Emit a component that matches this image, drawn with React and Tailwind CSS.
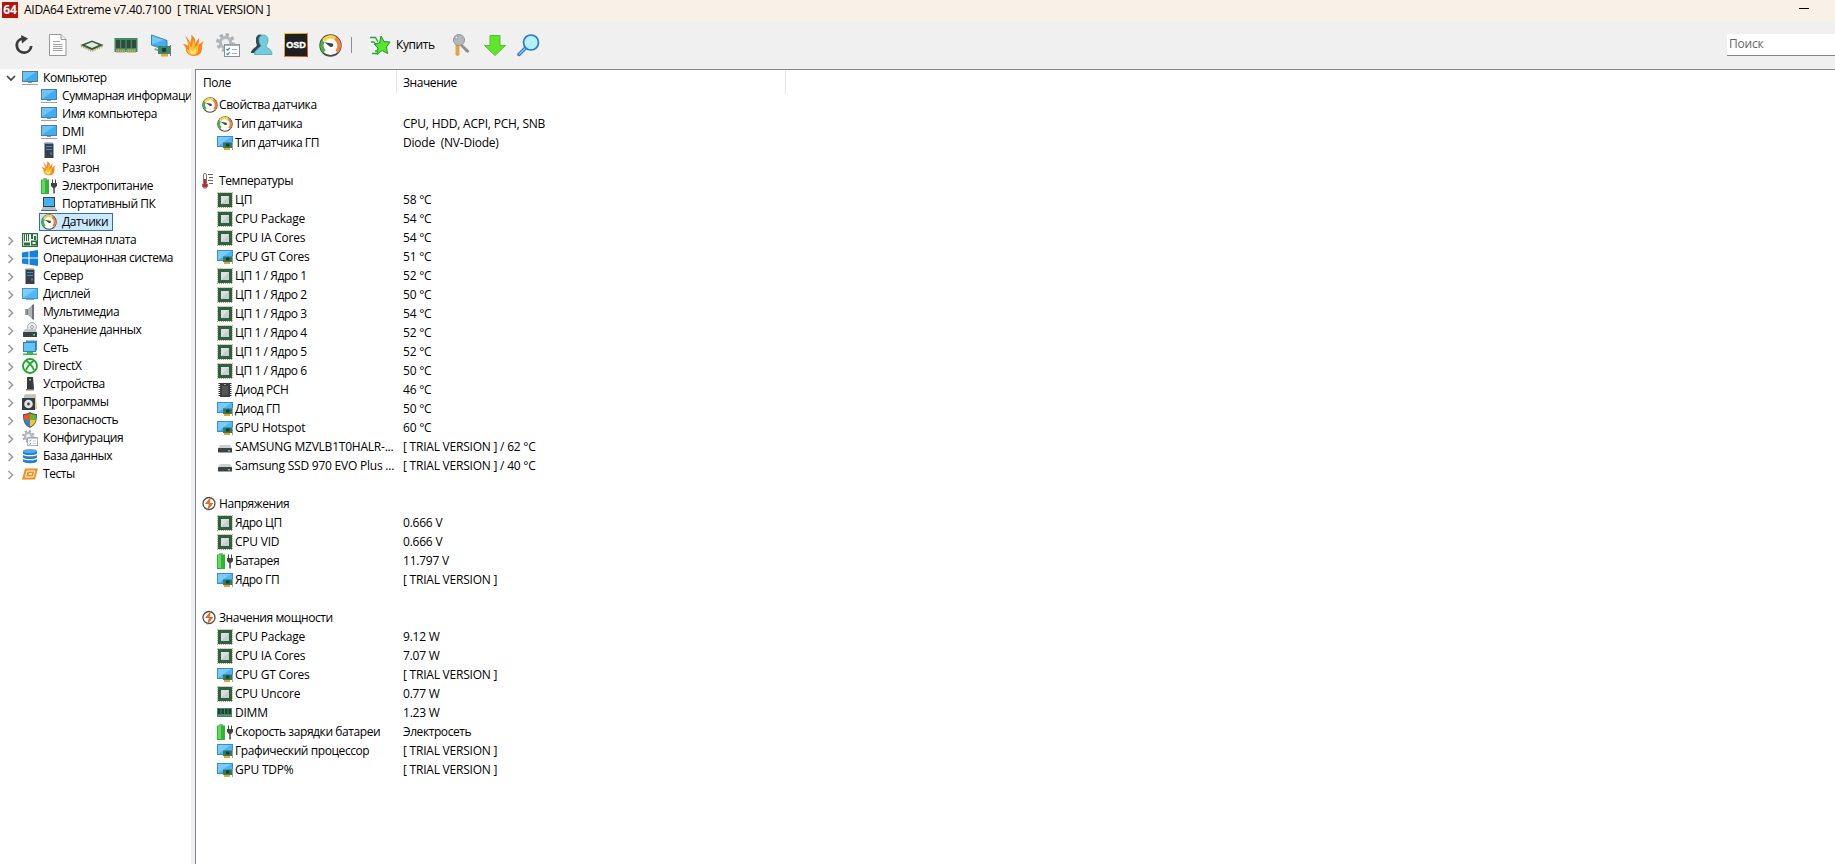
const Svg = ({ size = 16, box = 16, children }) => (
  <svg width={size} height={size} viewBox={`0 0 ${box} ${box}`} className="shrink-0">{children}</svg>
);

const Monitor = () => (
  <Svg>
    <rect x="0.5" y="1.5" width="15" height="10" fill="#3fadf3" stroke="#557c99"/>
    <path d="M1 11V2h13z" fill="#6cc5fa"/>
    <path d="M6 12h4v1H6z" fill="#8793a0"/>
    <path d="M0 14.500h16" stroke="#8ea6bb"/>
  </Svg>
);

const Display = () => (
  <Svg>
    <rect x="0.5" y="2.5" width="15" height="10" fill="#4fb8f6" stroke="#3f93cc"/>
    <path d="M1 12V3h13z" fill="#7bcdfb"/>
    <path d="M4 13.5h8" stroke="#8ea6bb"/>
  </Svg>
);

const Server = () => (
  <Svg>
    <path d="M3.5 1h8l1 1v14h-9z" fill="#3a404b"/>
    <path d="M3.5 0.500h8l1 1.500h-9z" fill="#8b9098"/>
    <path d="M5 4.5h6M5 7.5h6" stroke="#3c91df"/>
    <path d="M9 10.500h2v2H9z" fill="#687080"/>
  </Svg>
);

const Flame = ({ size = 16 }) => (
  <Svg size={size} box={24}>
    <path d="M3 3c3 2 4 4 5 7 1-3 2-5 1-8 4 2 5 5 4 9l4-6c0 3 0 5-1 7l6-4c-2 3-2 5-2 7 0 5-3 8-8 8S4 20 4 16c0-1-1-3-3-5 3 0 4 1 5 2C6 9 5 6 3 3z" fill="#f8841f"/>
    <path d="M5 7c2 2 3 5 4 8 1-3 2-5 2-8 2 3 2 5 1 8l5-4c-1 3-1 5-1 7-1 3-3 4-5 4-4 0-6-3-6-6l2 1c0-4 0-6-2-10z" fill="#ffc33a"/>
    <path d="M8 16l3 3 3-3c0 3-1 5-3 5s-3-2-3-5z" fill="#ffe98a"/>
  </Svg>
);

const Battery = () => (
  <Svg>
    <path d="M2 0h4v2H2z" fill="#a9b0a8"/>
    <path d="M0 1.500h8V16H0z" fill="#2fb532"/>
    <path d="M1 2h3v13H1z" fill="#62d95f"/>
    <path d="M11.500 1.500v4M14.500 1.500v4" stroke="#444"/>
    <path d="M10 5h6v3l-2 2h-2l-2-2z" fill="#444"/>
    <path d="M13 10v5.500" stroke="#444" strokeWidth="1.500"/>
  </Svg>
);

const Laptop = () => (
  <Svg>
    <rect x="2.500" y="1.500" width="11" height="9" fill="#46b0f2" stroke="#33424f"/>
    <path d="M2 11h12l2 3H0z" fill="#b9bec4"/>
    <path d="M0 14h16v1H0z" fill="#59636d"/>
  </Svg>
);

const Gauge = ({ size = 16 }) => (
  <Svg size={size} box={24}>
    <circle cx="12" cy="12" r="10.800" fill="#fff" stroke="#4b4b43" strokeWidth="1.700"/>
    <path d="M5.600 18.400A9 9 0 0 1 4.200 7.500" fill="none" stroke="#4fae45" strokeWidth="3.800"/>
    <path d="M4.700 6.600A9 9 0 0 1 17 4.500" fill="none" stroke="#f4d54a" strokeWidth="3.800"/>
    <path d="M17 4.500A9 9 0 0 1 18.400 18.400" fill="none" stroke="#ee8140" strokeWidth="3.800"/>
    <path d="M5.500 8.500l8.500 1.500c2 1.200 .5 4.200-2 3.500z" fill="#3b4548"/>
  </Svg>
);

const Board = () => (
  <Svg>
    <rect x="0.600" y="1.600" width="14.800" height="12.800" fill="#f3f8f3" stroke="#2c7140" strokeWidth="1.200"/>
    <path d="M2.500 2v7M4.500 2v7M6.500 2v7" stroke="#2c7140"/>
    <path d="M9 2h2v5H9zM12 4h2v4h-2zM2 10.500h6v3H2zM9 8.500h6v5H9z" fill="#2c7140"/>
    <path d="M10.500 10h3v2h-3z" fill="#f3f8f3"/>
  </Svg>
);

const Windows = () => (
  <Svg>
    <path d="M0 2.500l6.500-1v6H0zM7.500 1.300L16 0v7.500H7.500zM0 8.500h6.500v6L0 13.500zM7.500 8.500H16V16l-8.500-1.300z" fill="#1683d8"/>
  </Svg>
);

const Speaker = () => (
  <Svg>
    <path d="M3 5h3v6H3z" fill="#6e747b"/>
    <path d="M6 5l4-4v14l-4-4z" fill="#aeb3b7"/>
    <path d="M10 1l2-1v16l-2-1z" fill="#6e7377"/>
    <path d="M4 5v6" stroke="#c7cbd0"/>
  </Svg>
);

const Storage = () => (
  <Svg>
    <circle cx="10" cy="5" r="4.500" fill="#eceeef" stroke="#a7acb0"/>
    <circle cx="10" cy="5" r="1.500" fill="#fff" stroke="#999"/>
    <path d="M3 7h10l2 3H1z" fill="#c4c7c9"/>
    <rect x="1" y="10" width="14" height="5" rx="0.500" fill="#3c4144"/>
    <path d="M11 12h2v1.500h-2z" fill="#52e264"/>
  </Svg>
);

const Network = () => (
  <Svg>
    <path d="M4 .5h11v10H4z" fill="#3c93cf"/>
    <rect x="1.500" y="2.500" width="12" height="9" fill="#64c2f6" stroke="#3581b5"/>
    <path d="M5 12h6v1.500h4V15H1v-1.500h4z" fill="#3bb849"/>
  </Svg>
);

const DirectX = () => (
  <Svg>
    <circle cx="8" cy="8" r="7" fill="#fff" stroke="#1fa82b" strokeWidth="1.900"/>
    <path d="M4 3.200c2 0 6.500 5 8 9M12 3.200c-2 0-6.500 5-8 9" fill="none" stroke="#1fa82b" strokeWidth="1.800"/>
  </Svg>
);

const Device = () => (
  <Svg>
    <path d="M5 1h6l1 12H5z" fill="#393b3d"/>
    <path d="M4 13h8v1.500H4z" fill="#777b7e"/>
    <path d="M7 3h2v1.500H7z" fill="#57e556"/>
  </Svg>
);

const Programs = () => (
  <Svg>
    <path d="M3 0h11l1 15H3z" fill="#e7c98f"/>
    <path d="M2 1h11v3H2z" fill="#b8c4cc"/>
    <rect x="0" y="4" width="13" height="12" fill="#353c42"/>
    <circle cx="6.500" cy="10" r="4.300" fill="#e2e5e8"/>
    <circle cx="6.500" cy="10" r="1.400" fill="#37404a"/>
  </Svg>
);

const Shield = () => (
  <Svg>
    <path d="M8 0c2 1.500 5 2 7 2 0 7-1 11-7 14C2 13 1 9 1 2c2 0 5-.5 7-2z" fill="#55595d"/>
    <path d="M8 1.500V8H2.200C2 6 2 4.500 2 3c2 0 4-.5 6-1.500z" fill="#e8562a"/>
    <path d="M8 1.500V8h5.800c.2-2 .2-3.500.2-5-2 0-4-.5-6-1.500z" fill="#6bb52b"/>
    <path d="M8 8v6.800C4.500 13 2.800 11 2.200 8z" fill="#2f82d6"/>
    <path d="M8 8v6.800c3.500-1.800 5.200-3.800 5.800-6.800z" fill="#f7c52c"/>
  </Svg>
);

const Config = ({ size = 16 }) => (
  <Svg size={size} box={24}>
    <circle cx="9.500" cy="9.500" r="7.800" fill="none" stroke="#a9afb5" strokeWidth="3.200" strokeDasharray="3.300 2.800"/>
    <circle cx="9.500" cy="9.500" r="5.200" fill="#eceeef" stroke="#b3b8bd" strokeWidth="3.200"/>
    <rect x="8.500" y="11.500" width="15" height="12" fill="#fff" stroke="#868d94"/>
    <path d="M9 11.500h14v1.500H9z" fill="#a6adb4"/>
    <path d="M10.500 16l1.200 1.200 2-2.400M10.500 20.500l1.200 1.200 2-2.400" fill="none" stroke="#2b7fd6" strokeWidth="1.200"/>
    <path d="M16 16.500h5M16 20.500h5" stroke="#a7aeb5"/>
  </Svg>
);

const Database = () => (
  <Svg>
    <path d="M1 3v10c0 3 14 3 14 0V3z" fill="#2581d0"/>
    <path d="M1 6c1 2.200 13 2.200 14 0M1 10c1 2.200 13 2.200 14 0" fill="none" stroke="#fff" strokeWidth="1.200"/>
    <ellipse cx="8" cy="3" rx="7" ry="2" fill="#55a9ea"/>
  </Svg>
);

const Tests = () => (
  <Svg>
    <path d="M3 2.500h13L13 13.500H0z" fill="#ee9220"/>
    <path d="M5 5h7.800l-1.500 6H3.500z" fill="none" stroke="#fff" strokeWidth="0.900"/>
    <path d="M7 7.200h3l-.4 1.600h-3z" fill="#fff"/>
  </Svg>
);

const Cpu = () => (
  <Svg>
    <rect x="0.600" y="0.600" width="14.800" height="14.800" fill="none" stroke="#a9a45b" strokeWidth="1.200" strokeDasharray="1 1"/>
    <rect x="1" y="1" width="14" height="14" fill="#2f6044"/>
    <rect x="4" y="4" width="8" height="8" fill="#dce0dd"/>
    <path d="M4 12l8-8v8z" fill="#c8cecb"/>
  </Svg>
);

const Gpu = () => (
  <Svg>
    <rect x="0.500" y="1.500" width="15" height="10" fill="#4db5f5" stroke="#3c8fc5"/>
    <path d="M1 11V2h13z" fill="#78cbfa"/>
    <rect x="6" y="7.500" width="9" height="5.500" fill="#35795e"/>
    <path d="M9 8.500h3.500v3H9z" fill="#173e31"/>
    <path d="M7 13h6v2H7z" fill="#e0aa2d"/>
    <path d="M15.500 7v8" stroke="#9aa0a5"/>
  </Svg>
);

const Pch = () => (
  <Svg>
    <path d="M1.500 1.500h13M1.500 3.500h13M1.500 5.500h13M1.500 7.500h13M1.500 9.500h13M1.500 11.500h13M1.500 13.500h13" stroke="#333"/>
    <path d="M3 1h3l2 2 2-2h3v14H3z" fill="#3c3e40"/>
    <path d="M5 4h6v9H5z" fill="#535557"/>
  </Svg>
);

const Drive = () => (
  <Svg>
    <path d="M3 6h10l2 3H1z" fill="#cdd0d2"/>
    <rect x="1" y="9" width="14" height="4.500" rx="0.500" fill="#3e4346"/>
    <path d="M11 11h2v1.500h-2z" fill="#48dd63"/>
  </Svg>
);

const Dimm = () => (
  <Svg>
    <path d="M0 3h15v9H0z" fill="#3f8a67"/>
    <path d="M1 4h2.500v5H1zM4.500 4H7v5H4.500zM8 4h2.500v5H8zM11.500 4H14v5h-2.500z" fill="#213c32"/>
    <path d="M1 10.500h13" stroke="#7f9a64" strokeDasharray="1 1"/>
  </Svg>
);

const Thermo = () => (
  <Svg>
    <path d="M1.500 2a1.500 1.500 0 0 1 3 0v8a2.800 2.800 0 1 1-3 0z" fill="#fff" stroke="#777"/>
    <path d="M2 6h2v5H2z" fill="#c22a2a"/>
    <circle cx="3" cy="12.300" r="2.400" fill="#c22a2a"/>
    <path d="M6 1.500h5M7 4.500h4M6 7.500h5M7 10.500h4" stroke="#666"/>
  </Svg>
);

const Volt = () => (
  <Svg>
    <circle cx="7" cy="7.500" r="6" fill="#fff" stroke="#4e4e4e" strokeWidth="1.300"/>
    <path d="M9.500 0L3 8h4l-2.500 7.500L11.500 7H7.500z" fill="#df6a28"/>
  </Svg>
);

const Refresh = () => (
  <Svg size={20} box={20}>
    <path d="M8 3.500A7.200 7.200 0 1 0 17.200 11" fill="none" stroke="#3b3b3b" strokeWidth="2.800"/>
    <path d="M7 0l7 3.500L8 8.500z" fill="#3b3b3b"/>
  </Svg>
);

const Doc = () => (
  <Svg size={24} box={24}>
    <path d="M3.500 1.500H15l5 5v16H3.500z" fill="#fdfdfd" stroke="#979797"/>
    <path d="M15 1.500v5h5" fill="#eee" stroke="#979797"/>
    <path d="M7 8.500h7M7 11.500h9.500M7 13.500h9.500M7 15.500h9.500M7 17.500h9.500" stroke="#a2a2a2"/>
  </Svg>
);

const Chip = () => (
  <Svg size={24} box={24}>
    <path d="M.5 12.500L12 8l11.500 4.500L12 18z" fill="#d0bc68"/>
    <path d="M.5 12L12 7.500 23.500 12 12 17z" fill="#2f5c3d"/>
    <path d="M5 12l7-3 7 3-7 3z" fill="#e3eae4"/>
    <path d="M1 13.500l11 5 11-5" fill="none" stroke="#8f7d38" strokeDasharray="1 1.500"/>
  </Svg>
);

const Ram = () => (
  <Svg size={24} box={24}>
    <path d="M.5 5h23v14H.5z" fill="#3e8b65"/>
    <path d="M2 7h4v8H2zM7.300 7h4v8h-4zM12.700 7h4v8h-4zM18 7h4v8h-4z" fill="#344841"/>
    <path d="M2 16h9v3.500H2zM13 16h9v3.500h-9z" fill="#8f9a59"/>
    <path d="M2 18h20" stroke="#d0c47a" strokeDasharray="1 1"/>
  </Svg>
);

const ScreenCard = () => (
  <Svg size={24} box={24}>
    <path d="M3.500 2L19 7.500v10L3.500 12z" fill="#45adf0" stroke="#3d7fae"/>
    <path d="M4 11.500V2.800L16 7z" fill="#72c8fa"/>
    <path d="M7 15l6 2.500v1.500l-7-2z" fill="#96a2ac"/>
    <rect x="10" y="13" width="12" height="8" fill="#3d8565"/>
    <path d="M14 15h4v4h-4z" fill="#1a4032"/>
    <path d="M13 21h7v2.500h-7z" fill="#ddac36"/>
    <path d="M22.500 12v11" stroke="#72777b"/>
  </Svg>
);

const User = () => (
  <Svg size={24} box={24}>
    <path d="M6 6c0-6 8-6 8 0 0 3-1 5-2 6 0 3 4 4 4 8H1c0-4 5-5 6-8-1-1-1-3-1-6z" fill="#2f4753"/>
    <path d="M9 6.500c0-6 9-6 9 0 0 3-1 5-2 6 0 3 6 3 6 9H4.500c0-5 5.500-6 6.500-9-1-1-2-3-2-6z" fill="#74cbdc" stroke="#5cb0c3"/>
  </Svg>
);

const Osd = () => (
  <span className="flex h-6 w-6 items-center justify-center bg-linear-to-br from-[#f2d21d] to-[#d93a25]">
    <span className="flex h-[22px] w-[22px] items-center justify-center bg-[#202022] font-['Liberation_Sans',sans-serif] text-[9px] font-bold tracking-normal text-white [-webkit-text-stroke:0.4px_white]">OSD</span>
  </span>
);

const Star = () => (
  <Svg size={24} box={24}>
    <path d="M13 3l3 5.500 6 .5-3.500 5 1 6.500-5.500-3-5 4 1-6.500-4-4 5.500-1z" fill="#55e72b" stroke="#27932a"/>
    <path d="M2 4.500h5.500L10 9M3 9h3l2 3M7 18h2l1-2M4 20.500h5" fill="none" stroke="#2ba134" strokeWidth="1.300"/>
  </Svg>
);

const Keys = () => (
  <Svg size={24} box={24}>
    <path d="M6.500 9h4v13l-2 1-2-1z" fill="#e3a24a"/>
    <path d="M12 10l8.500 8-1.500 2-2-1-6.500-7z" fill="#8c8f92"/>
    <circle cx="10" cy="7" r="5.500" fill="#b6b9bc" stroke="#929598"/>
    <circle cx="7.500" cy="4.500" r="1.500" fill="#f0f0f0" stroke="#929598"/>
  </Svg>
);

const Down = () => (
  <Svg size={24} box={24}>
    <path d="M7 2.500h10v10h5.500L12 22.500 1.500 12.500H7z" fill="#5fe62a" stroke="#55bd32"/>
  </Svg>
);

const Find = () => (
  <Svg size={24} box={24}>
    <path d="M9 14.500l-7 7" stroke="#2a75c7" strokeWidth="3.500" strokeLinecap="round"/>
    <path d="M9 14.500l-7 7" stroke="#8cc9f5" strokeWidth="1.200"/>
    <circle cx="14" cy="9.500" r="7.500" fill="#b4f0ff" stroke="#2b78cc" strokeWidth="1.700"/>
  </Svg>
);

const Chevron = ({ open }) => (
  <svg width="10" height="10" viewBox="0 0 10 10" className="shrink-0">
    <path d={open ? "M1 3l4 4 4-4" : "M2.500 1l4 4-4 4"} fill="none" stroke={open ? "#404040" : "#a0a0a0"} strokeWidth="1.700"/>
  </svg>
);

// Cyrillic runs a little wide in Open Sans, so it is set tighter than Latin
const Label = ({ children }) => (
  <span className={/[а-яё]{3}/i.test(children) ? "tracking-[-0.42px]" : "tracking-[-0.22px]"}>{children}</span>
);

const computer = [
  { icon: Monitor, label: "Суммарная информация" },
  { icon: Monitor, label: "Имя компьютера" },
  { icon: Monitor, label: "DMI" },
  { icon: Server,  label: "IPMI" },
  { icon: Flame,   label: "Разгон" },
  { icon: Battery, label: "Электропитание" },
  { icon: Laptop,  label: "Портативный ПК" },
  { icon: Gauge,   label: "Датчики", selected: true },
];

const sections = [
  { icon: Board,    label: "Системная плата" },
  { icon: Windows,  label: "Операционная система" },
  { icon: Server,   label: "Сервер" },
  { icon: Display,  label: "Дисплей" },
  { icon: Speaker,  label: "Мультимедиа" },
  { icon: Storage,  label: "Хранение данных" },
  { icon: Network,  label: "Сеть" },
  { icon: DirectX,  label: "DirectX" },
  { icon: Device,   label: "Устройства" },
  { icon: Programs, label: "Программы" },
  { icon: Shield,   label: "Безопасность" },
  { icon: Config,   label: "Конфигурация" },
  { icon: Database, label: "База данных" },
  { icon: Tests,    label: "Тесты" },
];

const TRIAL = "[ TRIAL VERSION ]";

const groups = [
  { icon: Gauge, title: "Свойства датчика", rows: [
    [Gauge, "Тип датчика", "CPU, HDD, ACPI, PCH, SNB"],
    [Gpu, "Тип датчика ГП", "Diode  (NV-Diode)"],
  ] },
  { icon: Thermo, title: "Температуры", rows: [
    [Cpu, "ЦП", "58 °C"],
    [Cpu, "CPU Package", "54 °C"],
    [Cpu, "CPU IA Cores", "54 °C"],
    [Gpu, "CPU GT Cores", "51 °C"],
    [Cpu, "ЦП 1 / Ядро 1", "52 °C"],
    [Cpu, "ЦП 1 / Ядро 2", "50 °C"],
    [Cpu, "ЦП 1 / Ядро 3", "54 °C"],
    [Cpu, "ЦП 1 / Ядро 4", "52 °C"],
    [Cpu, "ЦП 1 / Ядро 5", "52 °C"],
    [Cpu, "ЦП 1 / Ядро 6", "50 °C"],
    [Pch, "Диод PCH", "46 °C"],
    [Gpu, "Диод ГП", "50 °C"],
    [Gpu, "GPU Hotspot", "60 °C"],
    [Drive, "SAMSUNG MZVLB1T0HALR-...", `${TRIAL} / 62 °C`],
    [Drive, "Samsung SSD 970 EVO Plus ...", `${TRIAL} / 40 °C`],
  ] },
  { icon: Volt, title: "Напряжения", rows: [
    [Cpu, "Ядро ЦП", "0.666 V"],
    [Cpu, "CPU VID", "0.666 V"],
    [Battery, "Батарея", "11.797 V"],
    [Gpu, "Ядро ГП", TRIAL],
  ] },
  { icon: Volt, title: "Значения мощности", rows: [
    [Cpu, "CPU Package", "9.12 W"],
    [Cpu, "CPU IA Cores", "7.07 W"],
    [Gpu, "CPU GT Cores", TRIAL],
    [Cpu, "CPU Uncore", "0.77 W"],
    [Dimm, "DIMM", "1.23 W"],
    [Battery, "Скорость зарядки батареи", "Электросеть"],
    [Gpu, "Графический процессор", TRIAL],
    [Gpu, "GPU TDP%", TRIAL],
  ] },
];

const TitleBar = () => (
  <header className="flex h-[21px] shrink-0 items-center justify-between bg-[#f9f1e8] pl-[2px] pr-[26px]">
    <div className="flex items-center gap-[6px] pb-[2px]">
      <span className="flex h-4 w-4 items-center justify-center bg-[#b3150f] text-[12px] font-bold leading-none text-white">64</span>
      <span className="whitespace-pre tracking-[-0.28px]">AIDA64 Extreme v7.40.7100  [ TRIAL VERSION ]</span>
    </div>
    <span className="mb-[4px] h-px w-[10px] bg-black"/>
  </header>
);

const tools = [Refresh, Doc, Chip, Ram, ScreenCard, Flame, Config, User, Osd, Gauge];

const Toolbar = () => (
  <div className="flex h-[48px] shrink-0 items-center justify-between bg-[#f0f0f0] pl-[7px]">
    <div className="flex items-center">
      {tools.map((Tool, i) => (
        <span key={i} className="flex w-[34px] justify-center"><Tool size={i === 9 ? 23 : 24}/></span>
      ))}
      <span className="ml-[4px] h-4 w-px bg-[#8d8d8d]"/>
      <span className="ml-[16px] flex items-center gap-[4px]"><Star/><Label>Купить</Label></span>
      <span className="ml-[14px] flex gap-[10px]"><Keys/><Down/><Find/></span>
    </div>
    <div className="flex h-[22px] w-[108px] items-center border-b border-[#868686] bg-white pl-[2px] pb-px text-[#666]">Поиск</div>
  </div>
);

const Tree = () => (
  <nav className="w-[191px] shrink-0 overflow-hidden whitespace-nowrap bg-white">
    <div className="flex h-[18px] items-center pl-[6px]">
      <Chevron open/>
      <span className="ml-[6px] mr-[5px]"><Monitor/></span><Label>Компьютер</Label>
    </div>
    {computer.map(({ icon: Icon, label, selected }) => (
      <div key={label} className="flex h-[18px] items-center pl-[39px]">
        <span className={`flex h-[18px] items-center gap-[5px] border pl-px pr-[4px] ${selected ? "border-[#2d6db5] bg-[#cce8ff]" : "border-transparent"}`}>
          <Icon/><Label>{label}</Label>
        </span>
      </div>
    ))}
    {sections.map(({ icon: Icon, label }) => (
      <div key={label} className="flex h-[18px] items-center pl-[6px]">
        <span className="pt-[2px]"><Chevron/></span>
        <span className="ml-[6px] mr-[5px]"><Icon/></span><Label>{label}</Label>
      </div>
    ))}
  </nav>
);

const Sensors = () => (
  <main className="min-w-0 flex-1 border-l border-t border-[#828790] bg-white">
    <div className="mb-px flex h-[24px] items-center">
      <span className="flex h-full w-[201px] items-center border-r border-[#e5e5e5] pl-[7px] pt-[2px]"><Label>Поле</Label></span>
      <span className="flex h-full w-[389px] items-center border-r border-[#e5e5e5] pl-[6px] pt-[2px]"><Label>Значение</Label></span>
    </div>
    <div className="flex flex-col gap-[19px]">
      {groups.map(({ icon: Icon, title, rows }) => (
        <section key={title}>
          <div className="flex h-[19px] items-center gap-px pl-[6px]"><Icon/><Label>{title}</Label></div>
          {rows.map(([RowIcon, name, value], i) => (
            <div key={i} className="flex h-[19px] items-center whitespace-pre">
              <span className="flex w-[207px] items-center gap-[2px] pl-[21px]"><RowIcon/><Label>{name}</Label></span>
              <Label>{value}</Label>
            </div>
          ))}
        </section>
      ))}
    </div>
  </main>
);

const App = () => (
  <div className="flex h-[864px] w-[1835px] flex-col overflow-hidden bg-[#f0f0f0] font-['Open_Sans','Noto_Sans',sans-serif] text-[12px] leading-[16px] tracking-[-0.2px] text-black">
    <TitleBar/>
    <Toolbar/>
    <div className="flex min-h-0 flex-1 gap-[4px]">
      <Tree/>
      <Sensors/>
    </div>
  </div>
);

export default App;
